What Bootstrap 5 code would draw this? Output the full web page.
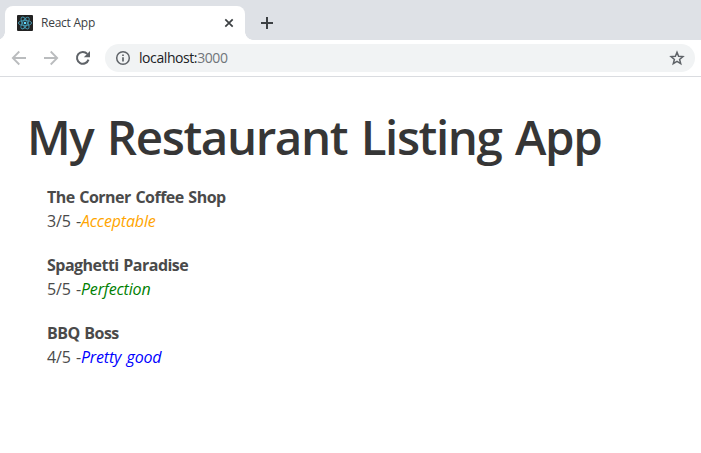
<!DOCTYPE html>
<html lang="en">
<head>
<meta charset="utf-8">
<meta name="viewport" content="width=device-width, initial-scale=1">
<title>React App</title>
<link href="https://cdn.jsdelivr.net/npm/bootstrap@5.3.0/dist/css/bootstrap.min.css" rel="stylesheet">
<style>
  body { font-family: "Open Sans", "Noto Sans", sans-serif; color: #4a4a4a; background: #fff; overflow: hidden; }
  svg { display: block; flex: none; }
  .tab-strip { height: 40px; padding: 6px 0 0 5px; background: #dee1e6; }
  .browser-tab { width: 240px; height: 34px; padding: 0 10px 0 12px; background: #fff; border-radius: 8px 8px 0 0; position: relative; }
  .browser-tab::before, .browser-tab::after { content: ""; position: absolute; bottom: 0; width: 8px; height: 8px; }
  .browser-tab::before { left: -8px; background: radial-gradient(circle at 0 0, transparent 7.5px, #fff 8px); }
  .browser-tab::after { right: -8px; background: radial-gradient(circle at 100% 0, transparent 7.5px, #fff 8px); }
  .tab-title { font-size: 12px; line-height: 16px; color: #3c4043; margin-left: 8px; letter-spacing: -.25px; }
  .new-tab { margin-left: 15px; }
  .toolbar { height: 37px; padding: 0 6px 0 11px; border-bottom: 1px solid #dadce0; }
  .tool-icons { gap: 16px; width: 94px; }
  .omnibox { height: 28px; padding: 0 10px; background: #f1f3f4; }
  .address { font-size: 14px; line-height: 20px; color: #202124; margin-left: 8px; letter-spacing: -.42px; }
  .address span { color: #70757a; }
  .page { padding: 33px 27px; }
  .page-title { font-size: 47.5px; line-height: 54px; font-weight: 600; color: #363636; margin: 0 0 21px; letter-spacing: -1.4px; word-spacing: 2.5px; white-space: nowrap; }
  .listing { padding-left: 20px; font-size: 16px; line-height: 24px; margin-bottom: 20px; }
  .listing .name { font-weight: 700; letter-spacing: -.52px; word-spacing: 1px; }
  .listing .rating { letter-spacing: -.15px; word-spacing: 1.2px; }
  .acceptable { color: orange; }
  .perfection { color: green; }
  .good { color: blue; }
</style>
<script src="https://cdn.jsdelivr.net/npm/bootstrap@5.3.0/dist/js/bootstrap.bundle.min.js"></script>
</head>
<body>
<header>
  <div class="tab-strip d-flex">
    <div class="browser-tab d-flex align-items-center">
      <svg width="16" height="16" viewBox="0 0 16 16"><rect width="16" height="16" rx="1" fill="#222"/><g fill="none" stroke="#469bb3" stroke-width=".9"><ellipse cx="8" cy="8" rx="6.6" ry="2.6"/><ellipse cx="8" cy="8" rx="6.6" ry="2.6" transform="rotate(60 8 8)"/><ellipse cx="8" cy="8" rx="6.6" ry="2.6" transform="rotate(120 8 8)"/></g><circle cx="8" cy="8" r="1.3" fill="#61dafb"/></svg>
      <span class="tab-title">React App</span>
      <svg class="ms-auto" width="12" height="12" viewBox="0 0 12 12"><path d="M2.3 2.3l7.4 7.4M9.7 2.3L2.3 9.7" stroke="#3c4043" stroke-width="1.7"/></svg>
    </div>
    <div class="new-tab d-flex align-items-center">
      <svg width="14" height="14" viewBox="0 0 14 14"><path d="M7 1v12M1 7h12" stroke="#3c4043" stroke-width="2"/></svg>
    </div>
  </div>
  <div class="toolbar d-flex align-items-center">
    <div class="tool-icons d-flex">
      <svg width="16" height="16" viewBox="0 0 16 16"><path d="M15 8H2M8.3 1.5L1.8 8l6.5 6.5" fill="none" stroke="#babcbe" stroke-width="1.8"/></svg>
      <svg width="16" height="16" viewBox="0 0 16 16"><path d="M1 8h13M7.7 1.5L14.2 8l-6.5 6.5" fill="none" stroke="#babcbe" stroke-width="1.8"/></svg>
      <svg width="16" height="16" viewBox="0 0 16 16"><path d="M13.5 9.6A5.9 5.9 0 1 1 12.3 3.9" fill="none" stroke="#5f6368" stroke-width="2"/><path d="M15 1v6.2H8.8z" fill="#5f6368"/></svg>
    </div>
    <div class="omnibox d-flex align-items-center flex-grow-1 rounded-pill">
      <svg width="16" height="16" viewBox="0 0 16 16"><circle cx="8" cy="8" r="6.3" fill="none" stroke="#5f6368" stroke-width="1.5"/><path d="M8 7.2v4.3M8 4.5v1.5" stroke="#5f6368" stroke-width="1.7"/></svg>
      <span class="address">localhost:<span>3000</span></span>
      <svg class="ms-auto" width="16" height="16" viewBox="0 0 16 16"><path d="M8 2.3l1.6 4 4.3.3-3.3 2.8 1.1 4.2L8 11.3l-3.7 2.3 1.1-4.2L2.1 6.6l4.3-.3z" fill="none" stroke="#5f6368" stroke-width="1.5"/></svg>
    </div>
  </div>
</header>
<main class="page">
  <h1 class="page-title">My Restaurant Listing App</h1>
  <section class="listing"><div><span class="name">The Corner Coffee Shop</span></div><div><span class="rating">3/5 -<em class="acceptable">Acceptable</em></span></div></section>
  <section class="listing"><div><span class="name">Spaghetti Paradise</span></div><div><span class="rating">5/5 -<em class="perfection">Perfection</em></span></div></section>
  <section class="listing"><div><span class="name">BBQ Boss</span></div><div><span class="rating">4/5 -<em class="good">Pretty good</em></span></div></section>
</main>
</body>
</html>
